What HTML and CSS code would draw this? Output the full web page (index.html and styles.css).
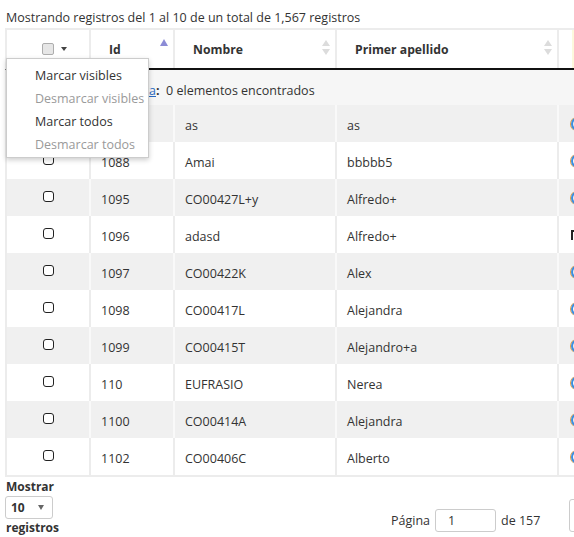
FILE: index.html
```html
<!DOCTYPE html>
<html lang="es">
<head>
<meta charset="utf-8">
<title>Registros</title>
<link rel="stylesheet" href="styles.css">
</head>
<body>
<div class="page">
  <div class="info">Mostrando registros del 1 al 10 de un total de 1,567 registros</div>
  <div class="grid">
    <div class="row head">
      <div class="cell chk-head"><span class="hbox"></span><span class="caret"></span></div>
      <div class="cell sortable"><span>Id</span>
        <svg class="sort asc" width="8" height="7" viewBox="0 0 8 7"><path d="M0 7 L4 0 L8 7 Z" fill="#8c8cd6"/></svg></div>
      <div class="cell sortable"><span>Nombre</span>
        <svg class="sort" width="8" height="15" viewBox="0 0 8 15"><path d="M0 6 L4 0 L8 6 Z M0 9 L4 15 L8 9 Z" fill="#dcdcdc"/></svg></div>
      <div class="cell sortable"><span>Primer apellido</span>
        <svg class="sort" width="8" height="15" viewBox="0 0 8 15"><path d="M0 6 L4 0 L8 6 Z M0 9 L4 15 L8 9 Z" fill="#dcdcdc"/></svg></div>
      <div class="cell extra-head"></div>
    </div>
    <div class="row filter">
      <div class="fcell"><span class="sel"><b>Seleccionados</b> <a href="#">ver lista</a></span><b>:</b>&nbsp; 0 elementos encontrados</div>
    </div>
    <div class="row odd"><div class="cell c"></div><div class="cell"></div><div class="cell">as</div><div class="cell">as</div><div class="cell ic"><span class="dot"></span></div></div>
    <div class="row"><div class="cell c"><span class="cb"></span></div><div class="cell">1088</div><div class="cell">Amai</div><div class="cell">bbbbb5</div><div class="cell ic"><span class="dot"></span></div></div>
    <div class="row odd"><div class="cell c"><span class="cb"></span></div><div class="cell">1095</div><div class="cell">CO00427L+y</div><div class="cell">Alfredo+</div><div class="cell ic"><span class="dot"></span></div></div>
    <div class="row"><div class="cell c"><span class="cb"></span></div><div class="cell">1096</div><div class="cell">adasd</div><div class="cell">Alfredo+</div><div class="cell ic"><span class="mark"></span></div></div>
    <div class="row odd"><div class="cell c"><span class="cb"></span></div><div class="cell">1097</div><div class="cell">CO00422K</div><div class="cell">Alex</div><div class="cell ic"><span class="dot"></span></div></div>
    <div class="row"><div class="cell c"><span class="cb"></span></div><div class="cell">1098</div><div class="cell">CO00417L</div><div class="cell">Alejandra</div><div class="cell ic"><span class="dot"></span></div></div>
    <div class="row odd"><div class="cell c"><span class="cb"></span></div><div class="cell">1099</div><div class="cell">CO00415T</div><div class="cell">Alejandro+a</div><div class="cell ic"><span class="dot"></span></div></div>
    <div class="row"><div class="cell c"><span class="cb"></span></div><div class="cell">110</div><div class="cell">EUFRASIO</div><div class="cell">Nerea</div><div class="cell ic"><span class="dot"></span></div></div>
    <div class="row odd"><div class="cell c"><span class="cb"></span></div><div class="cell">1100</div><div class="cell">CO00414A</div><div class="cell">Alejandra</div><div class="cell ic"><span class="dot"></span></div></div>
    <div class="row last"><div class="cell c"><span class="cb"></span></div><div class="cell">1102</div><div class="cell">CO00406C</div><div class="cell">Alberto</div><div class="cell ic"><span class="dot"></span></div></div>
  </div>
  <div class="footer">
    <div class="length">
      <div class="lbl first">Mostrar</div>
      <div class="select"><span>10</span><span class="tri"></span></div>
      <div class="lbl">registros</div>
    </div>
    <div class="pager">
      <span class="ptxt">Página</span>
      <span class="pinput">1</span>
      <span class="ptxt">de 157</span>
      <span class="pbtn"></span>
    </div>
  </div>
  <div class="menu">
    <div class="item">Marcar visibles</div>
    <div class="item off">Desmarcar visibles</div>
    <div class="item">Marcar todos</div>
    <div class="item off">Desmarcar todos</div>
  </div>
</div>
</body>
</html>
```
FILE: styles.css
```css
html, body {
  margin: 0;
  padding: 0;
  background: #fff;
}
body {
  width: 574px;
  height: 537px;
  overflow: hidden;
  font-family: "Open Sans", "Noto Sans", sans-serif;
  font-size: 12.5px;
  color: #333;
}
.page {
  position: relative;
  padding-left: 5px;
}
.info {
  padding-top: 8px;
  line-height: 20px;
  white-space: nowrap;
  padding-left: 1px;
}
.grid {
  width: 620px;
  border-bottom: 2px solid #ececec;
}
.row {
  display: grid;
  grid-template-columns: 84px 84px 162px 222px 68px;
  border-left: 2px solid #ececec;
  height: 37px;
  background: #fff;
}
.row.odd {
  background: #f0f0f0;
}
.cell {
  box-sizing: border-box;
  border-right: 2px solid #ececec;
  display: flex;
  align-items: center;
  padding-left: 10px;
  padding-top: 4px;
  white-space: nowrap;
  overflow: hidden;
}
.row.odd .cell {
  border-right-color: #f9f9f9;
}
.cell.c {
  justify-content: center;
  padding-left: 0;
  padding-top: 0;
}
.cb {
  width: 9px;
  height: 9px;
  border: 1.5px solid #222;
  border-radius: 3px;
  background: #fff;
  margin-top: -3px;
}
.row.head {
  height: 38px;
  border-top: 2px solid #ececec;
  border-bottom: 2px solid #111;
}
.row.head .cell {
  font-weight: bold;
  font-size: 12.2px;
  padding-left: 18px;
  padding-right: 5px;
  padding-top: 0;
  justify-content: space-between;
}
.row.head .cell.chk-head {
  justify-content: flex-start;
  padding-left: 35px;
}
.hbox {
  width: 10px;
  height: 10px;
  border: 1px solid #adadad;
  border-radius: 2px;
  background: #e6e6e6;
}
.caret {
  margin-left: 7px;
  width: 0;
  height: 0;
  border-left: 3px solid transparent;
  border-right: 3px solid transparent;
  border-top: 4px solid #444;
}
.sort {
  display: block;
  margin-top: -3px;
}
.sort.asc {
  margin-top: -14px;
}
.extra-head {
  background: linear-gradient(to right, #fff 13px, #fdf8dc 13px);
}
.row.filter {
  height: 35px;
  background: #f6f6f6;
  display: flex;
}
.fcell {
  display: flex;
  align-items: center;
  white-space: nowrap;
  padding-top: 5px;
}
.sel {
  display: inline-block;
  width: 149px;
  text-align: right;
  overflow: hidden;
}
.sel a {
  color: #2a6ac2;
}
.cell.ic {
  padding-left: 12px;
  padding-top: 0;
}
.dot {
  width: 10px;
  height: 10px;
  border-radius: 50%;
  border: 2px solid #3a8ee0;
  box-shadow: -1px 0 0 #e39a3b;
  flex: none;
}
.mark {
  width: 8px;
  height: 8px;
  border-top: 2px solid #222;
  border-left: 2px solid #222;
  flex: none;
}
.footer {
  display: flex;
  align-items: flex-end;
}
.length {
  font-weight: bold;
  font-size: 12px;
  padding-left: 1px;
}
.lbl {
  line-height: 18px;
}
.lbl.first {
  padding-top: 1px;
}
.select {
  box-sizing: border-box;
  width: 48px;
  height: 23px;
  margin-left: -1px;
  border: 1px solid #ccc;
  border-radius: 3px;
  display: flex;
  align-items: center;
  justify-content: space-between;
  padding: 0 8px 0 5px;
}
.tri {
  width: 0;
  height: 0;
  border-left: 3px solid transparent;
  border-right: 3px solid transparent;
  border-top: 5px solid #666;
}
.pager {
  margin-left: 332px;
  margin-bottom: 5px;
  display: flex;
  align-items: flex-end;
  gap: 5px;
  white-space: nowrap;
}
.ptxt {
  line-height: 23px;
}
.pinput {
  box-sizing: border-box;
  width: 61px;
  height: 23px;
  border: 1px solid #ccc;
  border-radius: 3px;
  padding-left: 12px;
  line-height: 21px;
}
.pbtn {
  box-sizing: border-box;
  width: 40px;
  height: 33px;
  margin-left: 24px;
  border: 1px solid #ccc;
  border-radius: 3px;
}
.menu {
  position: absolute;
  left: 6px;
  top: 58px;
  width: 143px;
  height: 100px;
  box-sizing: border-box;
  background: #fff;
  border: 1px solid #ccc;
  box-shadow: 0 2px 5px rgba(0,0,0,0.2);
  padding-top: 5px;
}
.item {
  line-height: 23px;
  padding-left: 28px;
  font-size: 12.5px;
  color: #333;
  white-space: nowrap;
}
.item.off {
  color: #9a9a9a;
}
```
